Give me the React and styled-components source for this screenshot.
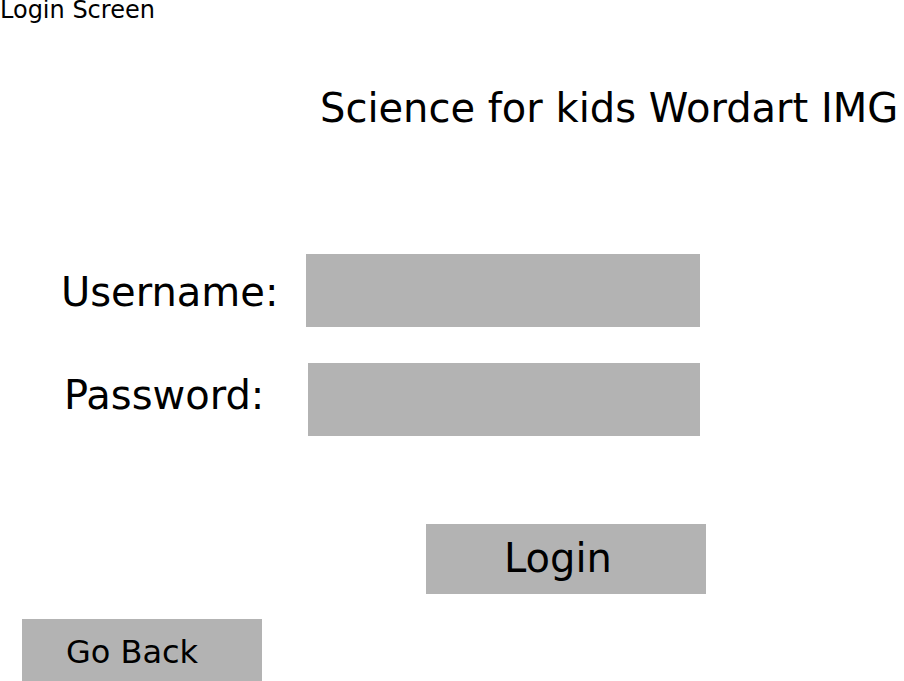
import React from "react";
import styled, { createGlobalStyle } from "styled-components";

const GlobalStyle = createGlobalStyle`
  * { box-sizing: border-box; }
  body { margin: 0; background: #fff; color: #000; font-family: Verdana, "DejaVu Sans", sans-serif; overflow-x: hidden; }
`;

const Page = styled.main`
  display: flex;
  flex-direction: column;
`;

const ScreenName = styled.p`
  margin: 0;
  font-size: 24px;
  line-height: 20px;
`;

const Title = styled.h1`
  margin: 64px 0 0;
  padding-left: 320px;
  font-size: 40px;
  line-height: 48px;
  font-weight: 400;
  white-space: nowrap;
`;

const Form = styled.form`
  display: flex;
  flex-direction: column;
  gap: 36px;
  margin-top: 122px;
  padding: 0 204px 0 60px;
`;

const Row = styled.div`
  display: flex;
  align-items: flex-start;
`;

const Label = styled.label`
  flex: none;
  width: ${(p) => p.$width}px;
  padding: ${(p) => p.$pad};
  font-size: 40px;
  line-height: 48px;
`;

const Field = styled.input`
  flex: 1;
  min-width: 0;
  height: 73px;
  padding: 0 16px;
  border: 0;
  border-radius: 0;
  background: #b3b3b3;
  font: inherit;
  font-size: 40px;
`;

const Button = styled.button`
  border: 0;
  background: #b3b3b3;
  color: #000;
  font: inherit;
`;

const Submit = styled(Button)`
  align-self: flex-end;
  width: 280px;
  height: 70px;
  margin: 52px -6px 0 0;
  padding: 0 16px 2px 0;
  font-size: 40px;
`;

const Back = styled(Button)`
  width: 240px;
  height: 62px;
  margin: 25px 0 0 22px;
  padding: 4px 20px 0 0;
  font-size: 32px;
`;

export default function App() {
  return (
    <Page>
      <GlobalStyle />
      <ScreenName>Login Screen</ScreenName>
      <Title>Science for kids Wordart IMG</Title>
      <Form onSubmit={(e) => e.preventDefault()}>
        <Row>
          <Label htmlFor="username" $width={246} $pad="14px 0 0 1px">Username:</Label>
          <Field id="username" type="text" />
        </Row>
        <Row>
          <Label htmlFor="password" $width={248} $pad="8px 0 0 4px">Password:</Label>
          <Field id="password" type="password" />
        </Row>
        <Submit type="submit">Login</Submit>
      </Form>
      <Back type="button">Go Back</Back>
    </Page>
  );
}
